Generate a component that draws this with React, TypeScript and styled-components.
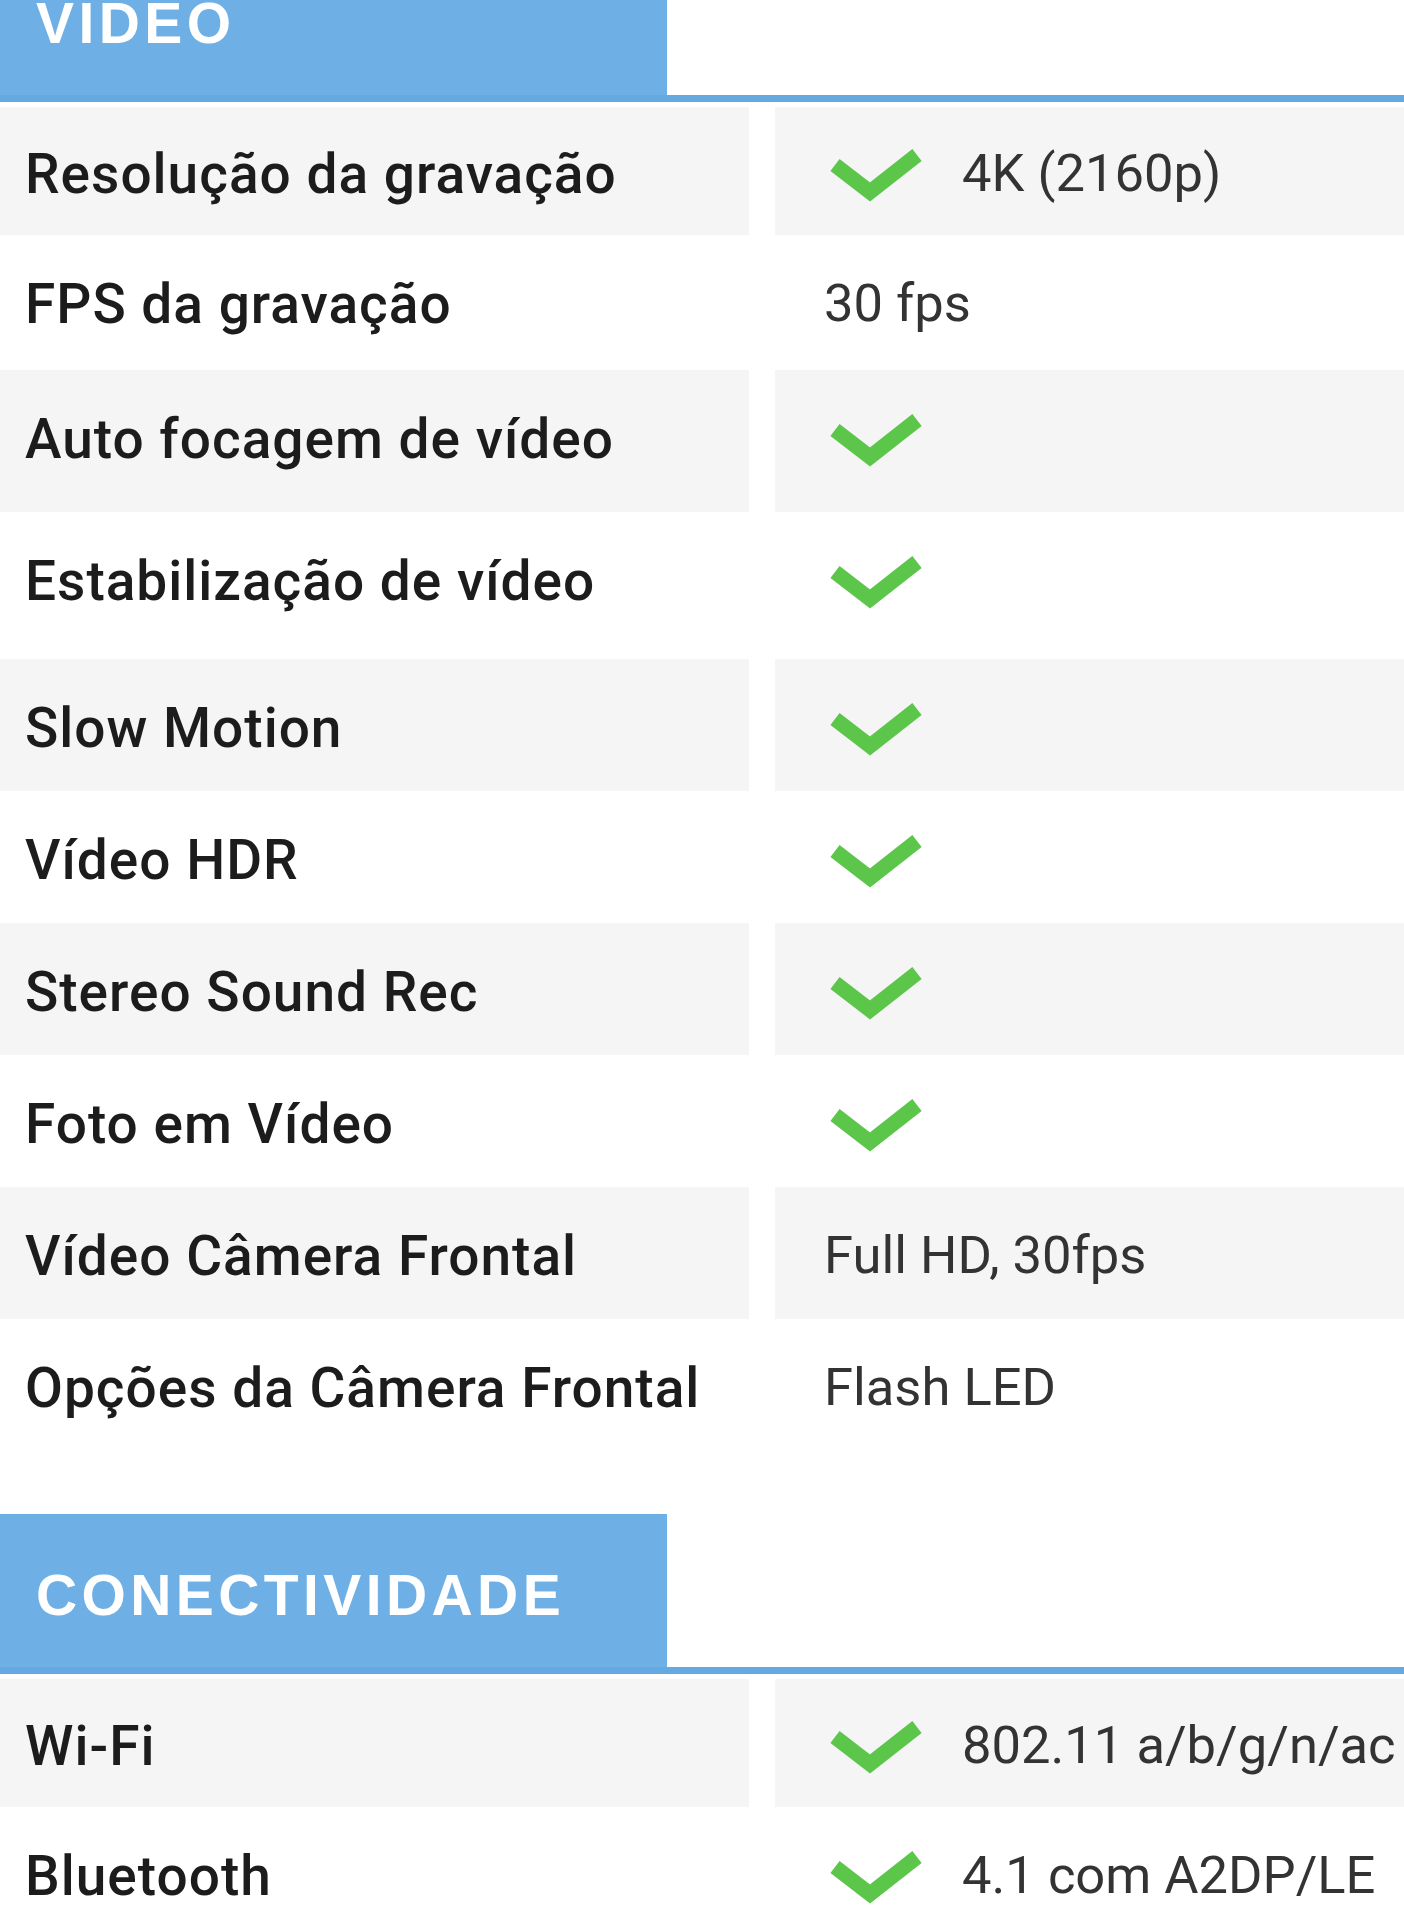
import React from "react";
import styled, { createGlobalStyle } from "styled-components";

const GlobalStyle = createGlobalStyle`
  html, body {
    margin: 0;
    padding: 0;
    background: #ffffff;
  }
  body {
    font-family: Roboto, "Noto Sans", Arial, sans-serif;
    overflow: hidden;
  }
`;

const Page = styled.div`
  width: 1404px;
  margin-top: -58px;
  display: flex;
  flex-direction: column;
`;

const Section = styled.section<{ $gapTop: number }>`
  display: flex;
  flex-direction: column;
  margin-top: ${(p) => p.$gapTop}px;
`;

const HeaderBar = styled.div`
  display: flex;
  border-bottom: 7px solid #65a9e2;
`;

const HeaderTab = styled.h2`
  margin: 0;
  width: 667px;
  height: 153px;
  box-sizing: border-box;
  padding: 49px 0 0 36px;
  background: #6eb0e5;
  color: #ffffff;
  font-family: "Liberation Sans", Arial, sans-serif;
  font-weight: 700;
  font-size: 57px;
  line-height: 64px;
  letter-spacing: 4.4px;
  text-transform: uppercase;
`;

const Rows = styled.div`
  display: flex;
  flex-direction: column;
  margin-top: 5px;
`;

const Row = styled.div<{ $h: number }>`
  display: grid;
  grid-template-columns: 749px 1fr;
  column-gap: 26px;
  height: ${(p) => p.$h}px;
`;

const Cell = styled.div<{ $shade: boolean; $extra: number }>`
  display: flex;
  align-items: center;
  box-sizing: border-box;
  padding-top: 6px;
  padding-bottom: ${(p) => p.$extra}px;
  background: ${(p) => (p.$shade ? "#f5f5f5" : "#ffffff")};
`;

const Label = styled(Cell)`
  padding-left: 25px;
  color: #1c1c1c;
  font-family: Roboto, "Noto Sans", sans-serif;
  font-weight: 500;
  font-size: 55px;
  letter-spacing: 1px;
  line-height: 1.17;
  white-space: nowrap;
`;

const Value = styled(Cell)`
  padding-left: 49px;
  gap: 36px;
  color: #333333;
  font-family: Roboto, "Noto Sans", sans-serif;
  font-weight: 400;
  font-size: 52.5px;
  line-height: 1.17;
  white-space: nowrap;
`;

const CheckSvg = styled.svg`
  flex: none;
  display: block;
  margin-left: 2px;
`;

const Check = () => (
  <CheckSvg width="100" height="62" viewBox="0 0 100 62" aria-hidden="true">
    <polyline
      points="9,22 44,49 91,12"
      fill="none"
      stroke="#5cc64b"
      strokeWidth="15"
      strokeLinejoin="miter"
      strokeLinecap="butt"
    />
  </CheckSvg>
);

type Spec = { label: string; check?: boolean; text?: string; extra?: number };

const video: Spec[] = [
  { label: "Resolução da gravação", check: true, text: "4K (2160p)" },
  { label: "FPS da gravação", text: "30 fps", extra: 3 },
  { label: "Auto focagem de vídeo", check: true, extra: 10 },
  { label: "Estabilização de vídeo", check: true, extra: 15 },
  { label: "Slow Motion", check: true },
  { label: "Vídeo HDR", check: true },
  { label: "Stereo Sound Rec", check: true },
  { label: "Foto em Vídeo", check: true },
  { label: "Vídeo Câmera Frontal", text: "Full HD, 30fps" },
  { label: "Opções da Câmera Frontal", text: "Flash LED" },
];

const connectivity: Spec[] = [
  { label: "Wi-Fi", check: true, text: "802.11 a/b/g/n/ac" },
  { label: "Bluetooth", check: true, text: "4.1 com A2DP/LE" },
];

const SpecTable = ({ items }: { items: Spec[] }) => (
  <Rows>
    {items.map((s, i) => {
      const shade = i % 2 === 0;
      const extra = s.extra ?? 0;
      const h = (i === 0 ? 128 : 132) + extra;
      return (
        <Row key={s.label} $h={h}>
          <Label $shade={shade} $extra={extra}>
            {s.label}
          </Label>
          <Value $shade={shade} $extra={extra}>
            {s.check && <Check />}
            {s.text && <span>{s.text}</span>}
          </Value>
        </Row>
      );
    })}
  </Rows>
);

export default function App() {
  return (
    <>
      <GlobalStyle />
      <Page>
        <Section $gapTop={0}>
          <HeaderBar>
            <HeaderTab>Video</HeaderTab>
          </HeaderBar>
          <SpecTable items={video} />
        </Section>
        <Section $gapTop={63}>
          <HeaderBar>
            <HeaderTab>Conectividade</HeaderTab>
          </HeaderBar>
          <SpecTable items={connectivity} />
        </Section>
      </Page>
    </>
  );
}
